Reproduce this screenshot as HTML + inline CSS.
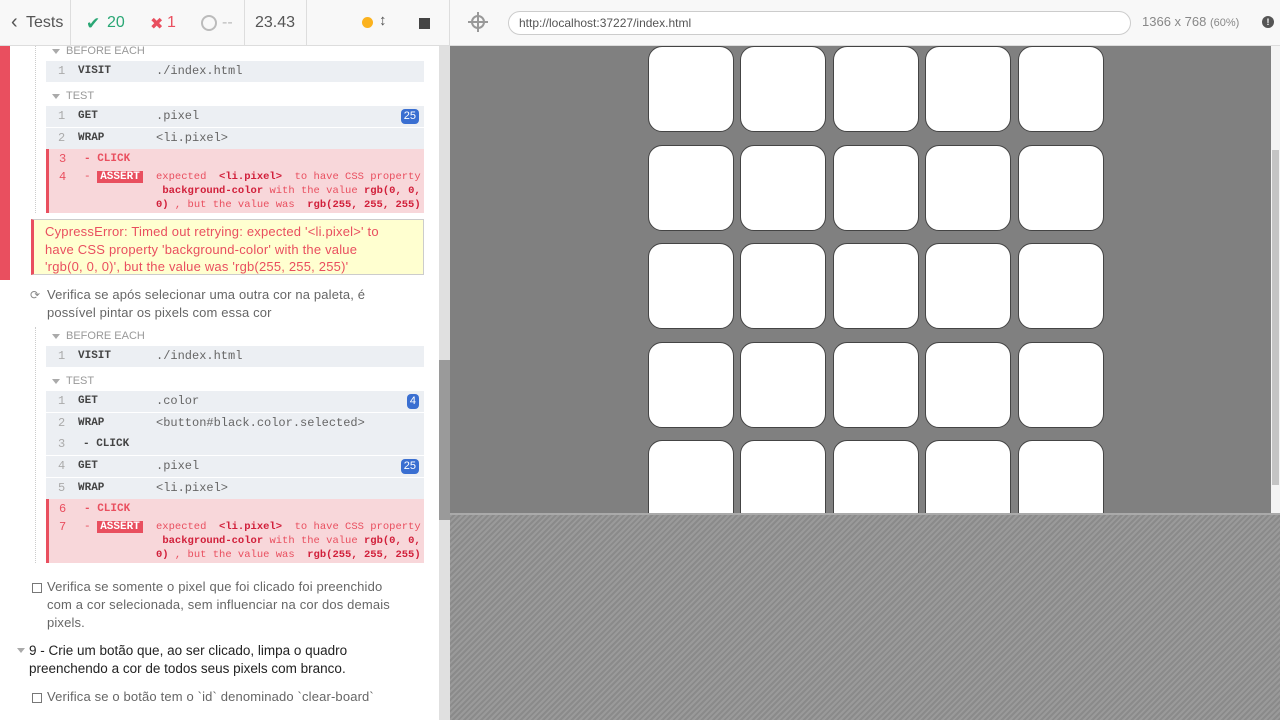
<!DOCTYPE html>
<html><head><meta charset="utf-8"><style>
*{box-sizing:border-box;margin:0;padding:0}
body{width:1280px;height:720px;overflow:hidden;position:relative;background:#fff;font-family:"Liberation Sans",sans-serif}
.abs{position:absolute}
.hdr{left:0;top:0;width:1280px;height:46px;background:#f8f8f8;border-bottom:1px solid #ddd}
.div{top:0;width:1px;height:46px;background:#ddd}
.ht{top:14px;font-size:16px;color:#555}
.lbl{font-size:11px;color:#999;left:66px}
.tri{width:0;height:0;border-left:4px solid transparent;border-right:4px solid transparent;border-top:5px solid #aaa}
.row{left:46px;width:378px;background:#eceff3;font-family:"Liberation Mono",monospace;font-size:12px}
.row .n{position:absolute;left:12px;color:#aaa}
.row .c{position:absolute;left:32px;font-weight:bold;color:#444;font-size:11px}
.row .v{position:absolute;left:110px;color:#666}
.badge{position:absolute;right:5px;top:3px;background:#3a6fd1;color:#fff;font-size:11px;border-radius:4px;padding:0 3px;height:15px;line-height:15px;font-family:"Liberation Sans",sans-serif}
.fail{left:46px;width:378px;background:#f8d7da;border-left:3px solid #e94f5f;font-family:"Liberation Mono",monospace;font-size:11px;color:#e94f5f}
.fail b{color:#d11f3a}
.asr{left:107px;top:21px;line-height:14px;font-size:10.5px;white-space:pre}
.pix{width:86px;height:86px;background:#fff;border:1px solid #444;border-radius:14px}
.txt{font-size:13px;color:#666;line-height:18px;letter-spacing:0.15px}
.cb{width:10px;height:10px;border:1px solid #777}
</style></head><body>
<div class="abs hdr"></div>
<div class="abs ht" style="left:11px;top:11px;font-size:20px">‹</div>
<div class="abs ht" style="left:26px">Tests</div>
<div class="abs div" style="left:70px"></div>
<div class="abs ht" style="left:86px;color:#2aa775;font-size:17px">✔</div>
<div class="abs ht" style="left:107px;color:#2aa775">20</div>
<div class="abs ht" style="left:150px;color:#e94f5f">✖</div>
<div class="abs ht" style="left:167px;color:#e94f5f">1</div>
<div class="abs" style="left:201px;top:15px;width:16px;height:16px;border:2px solid #bbb;border-radius:50%"></div>
<div class="abs ht" style="left:222px;color:#bbb">--</div>
<div class="abs div" style="left:244px"></div>
<div class="abs ht" style="left:255px">23.43</div>
<div class="abs div" style="left:306px"></div>
<div class="abs" style="left:362px;top:17px;width:11px;height:11px;border-radius:50%;background:#fbb21e"></div>
<div class="abs ht" style="left:379px;top:12px;font-size:15px;color:#555;font-weight:bold">↕</div>
<div class="abs" style="left:419px;top:18px;width:11px;height:11px;background:#444"></div>
<div class="abs div" style="left:449px"></div>
<div class="abs" style="left:471px;top:15px;width:14px;height:14px;border:2px solid #999;border-radius:50%"></div>
<div class="abs" style="left:477px;top:12px;width:2px;height:20px;background:#999"></div>
<div class="abs" style="left:468px;top:21px;width:20px;height:2px;background:#999"></div>
<div class="abs" style="left:508px;top:11px;width:623px;height:24px;border:1px solid #ccc;border-radius:12px;background:#fff;font-size:12px;color:#555;padding:4px 10px">http://localhost:37227/index.html</div>
<div class="abs" style="left:1142px;top:14px;font-size:13px;color:#888">1366 x 768 <span style="font-size:11px">(60%)</span></div>
<div class="abs" style="left:1262px;top:16px;width:12px;height:12px;border-radius:50%;background:#555;color:#fff;font-size:9px;text-align:center;line-height:12px;font-weight:bold">!</div>

<div class="abs" style="left:0;top:46px;width:10px;height:234px;background:#e94f5f"></div>
<div class="abs" style="left:35px;top:46px;height:167px;border-left:1px dotted #ccc"></div>
<div class="abs tri" style="left:52px;top:49px"></div><div class="abs lbl" style="top:45px">BEFORE EACH</div>
<div class="abs row" style="top:61px;height:21px"><span class="n" style="top:3px">1</span><span class="c" style="top:4px">VISIT</span><span class="v" style="top:3px">./index.html</span></div>
<div class="abs tri" style="left:52px;top:94px"></div><div class="abs lbl" style="top:90px">TEST</div>
<div class="abs row" style="top:106px;height:21px"><span class="n" style="top:3px">1</span><span class="c" style="top:4px">GET</span><span class="v" style="top:3px">.pixel</span><span class="badge">25</span></div>
<div class="abs row" style="top:128px;height:21px"><span class="n" style="top:3px">2</span><span class="c" style="top:4px">WRAP</span><span class="v" style="top:3px">&lt;li.pixel&gt;</span></div>
<div class="abs fail" style="top:149px;height:64px">
<span class="abs" style="left:10px;top:3px;font-size:12px">3</span><span class="abs" style="left:35px;top:4px;font-weight:bold">- CLICK</span>
<span class="abs" style="left:10px;top:21px;font-size:12px">4</span><span class="abs" style="left:35px;top:22px">- <span style="background:#e94f5f;color:#fff;font-weight:bold;padding:0 3px">ASSERT</span></span>
<div class="abs asr">expected  <b>&lt;li.pixel&gt;</b>  to have CSS property
 <b>background-color</b> with the value <b>rgb(0, 0,</b>
<b>0)</b> , but the value was  <b>rgb(255, 255, 255)</b></div>
</div>
<div class="abs" style="left:31px;top:219px;width:393px;height:56px;background:#ffffd0;border:1px solid #ccc;border-left:3px solid #e94f5f;font-size:13px;line-height:17.5px;color:#e94f5f;padding:3px 20px 0 11px;letter-spacing:0.2px">CypressError: Timed out retrying: expected '&lt;li.pixel&gt;' to have CSS property 'background-color' with the value<br>'rgb(0, 0, 0)', but the value was 'rgb(255, 255, 255)'</div>

<div class="abs" style="left:30px;top:288px;font-size:12px;color:#888">⟳</div>
<div class="abs txt" style="left:47px;top:286px;width:335px">Verifica se após selecionar uma outra cor na paleta, é possível pintar os pixels com essa cor</div>
<div class="abs" style="left:35px;top:327px;height:236px;border-left:1px dotted #ccc"></div>
<div class="abs tri" style="left:52px;top:334px"></div><div class="abs lbl" style="top:330px">BEFORE EACH</div>
<div class="abs row" style="top:346px;height:21px"><span class="n" style="top:3px">1</span><span class="c" style="top:4px">VISIT</span><span class="v" style="top:3px">./index.html</span></div>
<div class="abs tri" style="left:52px;top:379px"></div><div class="abs lbl" style="top:375px">TEST</div>
<div class="abs row" style="top:391px;height:21px"><span class="n" style="top:3px">1</span><span class="c" style="top:4px">GET</span><span class="v" style="top:3px">.color</span><span class="badge">4</span></div>
<div class="abs row" style="top:413px;height:42px"><span class="n" style="top:3px">2</span><span class="c" style="top:4px">WRAP</span><span class="v" style="top:3px">&lt;button#black.color.selected&gt;</span><span class="n" style="top:24px">3</span><span class="c" style="top:25px;left:37px">- CLICK</span></div>
<div class="abs row" style="top:456px;height:21px"><span class="n" style="top:3px">4</span><span class="c" style="top:4px">GET</span><span class="v" style="top:3px">.pixel</span><span class="badge">25</span></div>
<div class="abs row" style="top:478px;height:21px"><span class="n" style="top:3px">5</span><span class="c" style="top:4px">WRAP</span><span class="v" style="top:3px">&lt;li.pixel&gt;</span></div>
<div class="abs fail" style="top:499px;height:64px">
<span class="abs" style="left:10px;top:3px;font-size:12px">6</span><span class="abs" style="left:35px;top:4px;font-weight:bold">- CLICK</span>
<span class="abs" style="left:10px;top:21px;font-size:12px">7</span><span class="abs" style="left:35px;top:22px">- <span style="background:#e94f5f;color:#fff;font-weight:bold;padding:0 3px">ASSERT</span></span>
<div class="abs asr">expected  <b>&lt;li.pixel&gt;</b>  to have CSS property
 <b>background-color</b> with the value <b>rgb(0, 0,</b>
<b>0)</b> , but the value was  <b>rgb(255, 255, 255)</b></div>
</div>
<div class="abs cb" style="left:32px;top:583px"></div>
<div class="abs txt" style="left:47px;top:578px;width:350px">Verifica se somente o pixel que foi clicado foi preenchido com a cor selecionada, sem influenciar na cor dos demais pixels.</div>
<div class="abs tri" style="left:17px;top:648px"></div>
<div class="abs" style="left:29px;top:642px;width:340px;font-size:13.5px;line-height:18px;color:#222">9 - Crie um botão que, ao ser clicado, limpa o quadro preenchendo a cor de todos seus pixels com branco.</div>
<div class="abs cb" style="left:32px;top:693px"></div>
<div class="abs txt" style="left:47px;top:688px">Verifica se o botão tem o `id` denominado `clear-board`</div>
<div class="abs" style="left:439px;top:46px;width:11px;height:674px;background:#e0e0e0"></div>
<div class="abs" style="left:439px;top:360px;width:11px;height:160px;background:#9a9a9a"></div>

<div class="abs" style="left:450px;top:46px;width:822px;height:467px;background:#808080"></div>
<div class="abs" style="left:1271px;top:46px;width:9px;height:467px;background:#f4f4f4"></div>
<div class="abs" style="left:1272px;top:150px;width:7px;height:335px;background:#c4c4c4"></div>
<div class="abs" style="left:450px;top:513px;width:830px;height:207px;background:repeating-linear-gradient(135deg,#9a9a9a 0 2px,#8a8a8a 2px 4px);border-top:2px solid #aaa"></div>
<div class="abs" style="left:450px;top:46px;width:822px;height:467px;overflow:hidden">
<div class="abs pix" style="left:198px;top:0"></div><div class="abs pix" style="left:290px;top:0"></div><div class="abs pix" style="left:383px;top:0"></div><div class="abs pix" style="left:475px;top:0"></div><div class="abs pix" style="left:568px;top:0"></div>
<div class="abs pix" style="left:198px;top:99px"></div><div class="abs pix" style="left:290px;top:99px"></div><div class="abs pix" style="left:383px;top:99px"></div><div class="abs pix" style="left:475px;top:99px"></div><div class="abs pix" style="left:568px;top:99px"></div>
<div class="abs pix" style="left:198px;top:197px"></div><div class="abs pix" style="left:290px;top:197px"></div><div class="abs pix" style="left:383px;top:197px"></div><div class="abs pix" style="left:475px;top:197px"></div><div class="abs pix" style="left:568px;top:197px"></div>
<div class="abs pix" style="left:198px;top:296px"></div><div class="abs pix" style="left:290px;top:296px"></div><div class="abs pix" style="left:383px;top:296px"></div><div class="abs pix" style="left:475px;top:296px"></div><div class="abs pix" style="left:568px;top:296px"></div>
<div class="abs pix" style="left:198px;top:394px"></div><div class="abs pix" style="left:290px;top:394px"></div><div class="abs pix" style="left:383px;top:394px"></div><div class="abs pix" style="left:475px;top:394px"></div><div class="abs pix" style="left:568px;top:394px"></div>
</div>
</body></html>
